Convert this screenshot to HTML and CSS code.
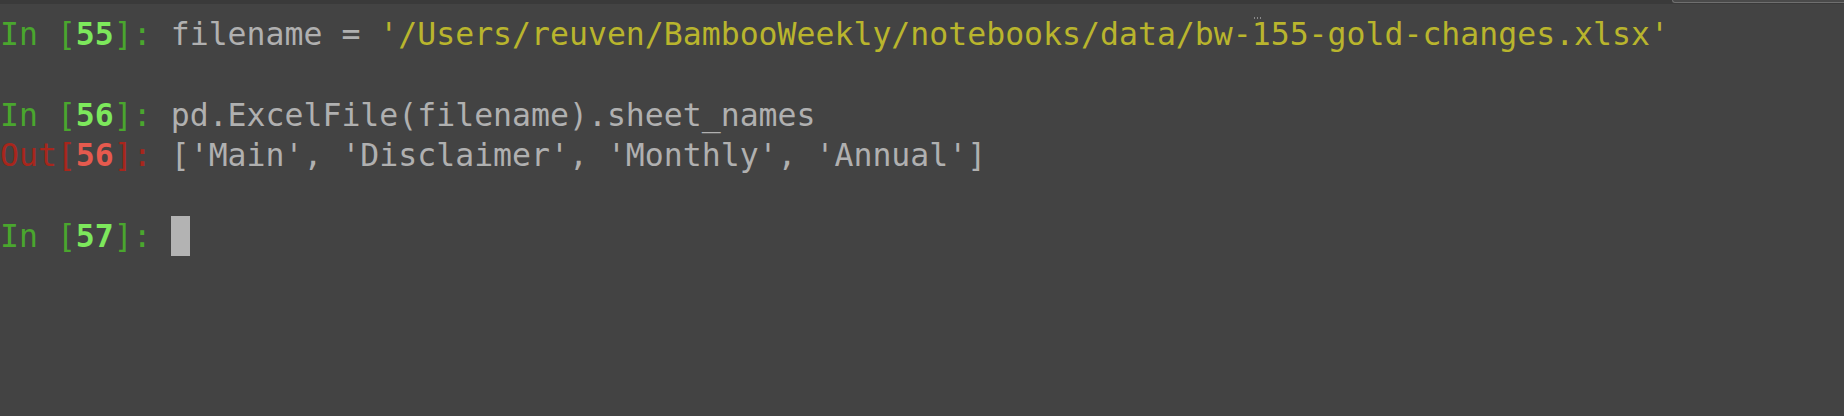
FILE: index.html
```html
<!DOCTYPE html>
<html>
<head>
<meta charset="utf-8">
<link rel="stylesheet" href="styles.css">
</head>
<body>
<div class="topbar"><div class="tab"></div></div>
<div class="console">
<div class="line"><span class="in">In [<b class="inn">55</b>]: </span><span class="code">filename = </span><span class="str">'/Users/reuven/BambooWeekly/notebooks/data/bw-<span class="mark">155</span>-gold-changes.xlsx'</span></div>
<div class="line"> </div>
<div class="line"><span class="in">In [<b class="inn">56</b>]: </span><span class="code">pd.ExcelFile(filename).sheet_names</span></div>
<div class="line"><span class="out">Out[<b class="outn">56</b>]: </span><span class="code">['Main', 'Disclaimer', 'Monthly', 'Annual']</span></div>
<div class="line"> </div>
<div class="line"><span class="in">In [<b class="inn">57</b>]: </span><span class="cursor"> </span></div>
</div>
</body>
</html>
```
FILE: styles.css
```css
html, body {
  margin: 0;
  padding: 0;
  background: #434343;
  height: 100%;
  overflow: hidden;
}
.topbar {
  height: 4px;
  background: #3a3a3a;
  position: relative;
}
.tab {
  position: absolute;
  left: 1672px;
  right: 0;
  top: 0;
  height: 2px;
  border-bottom: 1px solid #6f6f6f;
  border-left: 1px solid #6f6f6f;
  border-bottom-left-radius: 6px;
  background: #4a4a4a;
}
.console {
  padding-top: 10px;
  padding-left: 0;
  font-family: "DejaVu Sans Mono", monospace;
  font-size: 31.5px;
  line-height: 40.35px;
  color: #b0b0b0;
}
.line {
  height: 40.35px;
  white-space: pre;
}
.in { color: #4aa62e; }
.inn { color: #7de85c; font-weight: bold; }
.out { color: #a8261c; }
.outn { color: #e65a4e; font-weight: bold; }
.code { color: #b0b0b0; }
.str { color: #b9b52d; }
.mark { position: relative; }
.mark::before {
  content: "";
  position: absolute;
  left: 2px;
  top: 1px;
  width: 7px;
  height: 2px;
  background: repeating-linear-gradient(90deg, #8a8a8a 0 1px, transparent 1px 3px);
}
.cursor {
  display: inline-block;
  width: 19px;
  height: 40px;
  vertical-align: top;
  background: #b3b3b3;
}
```
